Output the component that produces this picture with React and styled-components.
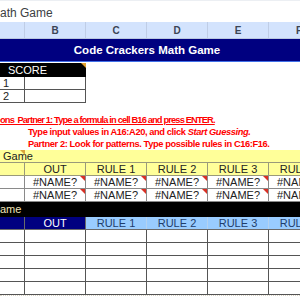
import React from "react";
import styled, { createGlobalStyle } from "styled-components";

const Global = createGlobalStyle`
  html, body { margin: 0; padding: 0; background: #fff; }
  body { width: 300px; height: 300px; overflow: hidden; font-family: "Liberation Sans", Arial, sans-serif; }
`;

const COLS = "25px 61px 61px 61px 61px 61px";

const Page = styled.div`
  width: 330px;
  display: flex;
  flex-direction: column;
`;

const DocTitle = styled.div`
  height: 22px;
  box-sizing: border-box;
  padding-top: 5px;
  font-size: 12px;
  color: #3c4043;
  border-top: 1px solid #eceff3;
`;

const ColHeader = styled.div`
  display: grid;
  grid-template-columns: ${COLS};
  height: 17px;
  background: #d3e3fd;
  border-bottom: 1px solid #b9c7e0;
  box-sizing: border-box;
`;

const ColLetter = styled.div`
  border-right: 1px solid #bfcde6;
  font-size: 10px;
  font-weight: bold;
  color: #3b4454;
  display: flex;
  align-items: center;
  justify-content: center;
`;

const Banner = styled.div`
  height: 23px;
  box-sizing: border-box;
  background: #000080;
  border-bottom: 1px solid #3f6fe8;
  color: #fff;
  font-weight: bold;
  font-size: 11.5px;
  display: flex;
  align-items: center;
  justify-content: center;
  width: 300px;
  padding-right: 6px;
`;

const ScoreTable = styled.div`
  margin-top: 1px;
  display: grid;
  grid-template-columns: 25px 61px;
  width: 86px;
`;

const ScoreHead = styled.div`
  grid-column: 1 / 3;
  height: 14px;
  background: #000;
  color: #fff;
  font-size: 11px;
  padding-left: 8px;
  display: flex;
  align-items: center;
  position: relative;
`;

const Corner = styled.span`
  position: absolute;
  top: 0;
  right: 0;
  width: 0;
  height: 0;
  border-top: 5px solid ${(p) => p.$color};
  border-left: 5px solid transparent;
`;

const ScoreCell = styled.div`
  height: 13px;
  box-sizing: border-box;
  border-bottom: 1px solid #555;
  border-right: 1px solid #555;
  font-size: 11px;
  color: #222;
  padding-left: 3px;
  display: flex;
  align-items: center;
`;

const Instructions = styled.div`
  margin-top: 11px;
  height: 36px;
  display: flex;
  flex-direction: column;
  color: #ff0000;
  font-weight: bold;
  font-size: 9.3px;
  line-height: 12px;
  white-space: nowrap;
`;

const InstrLine = styled.div`
  padding-left: ${(p) => p.$indent}px;
  letter-spacing: ${(p) => (p.$underline ? "-0.85px" : "-0.4px")};
  text-decoration: ${(p) => (p.$underline ? "underline" : "none")};
`;

const Band = styled.div`
  height: ${(p) => p.$h}px;
  box-sizing: border-box;
  background: ${(p) => p.$bg};
  color: ${(p) => p.$fg};
  font-size: 11px;
  padding-left: ${(p) => p.$pad}px;
  display: flex;
  align-items: center;
  position: relative;
  border-bottom: 1px solid ${(p) => p.$line};
`;

const BandCorner = styled.span`
  position: absolute;
  top: 0;
  left: 20px;
  border-top: 5px solid #d9a23a;
  border-left: 5px solid transparent;
`;

const Row = styled.div`
  display: grid;
  grid-template-columns: ${COLS};
  height: 12px;
  background: ${(p) => p.$bg || "transparent"};
  border-bottom: 1px solid ${(p) => p.$line};
`;

const Cell = styled.div`
  position: relative;
  border-right: 1px solid ${(p) => p.$line};
  background: ${(p) => p.$bg || "transparent"};
  color: ${(p) => p.$fg || "#222"};
  font-size: 11px;
  display: flex;
  align-items: center;
  justify-content: center;
  line-height: 12px;
  overflow: hidden;
  white-space: nowrap;
`;

const Footer = styled.div`
  border-top: 1px dotted #d8d2c4;
  height: 20px;
`;

const letters = ["", "B", "C", "D", "E", "F"];
const rules = ["OUT", "RULE 1", "RULE 2", "RULE 3", "RULE 4"];

export default function App() {
  return (
    <Page>
      <Global />
      <DocTitle>ath Game</DocTitle>
      <ColHeader>
        {letters.map((l, i) => (
          <ColLetter key={i}>{l}</ColLetter>
        ))}
      </ColHeader>
      <Banner>Code Crackers Math Game</Banner>
      <ScoreTable>
        <ScoreHead>
          SCORE
          <Corner $color="#e0a030" />
        </ScoreHead>
        <ScoreCell>1</ScoreCell>
        <ScoreCell />
        <ScoreCell>2</ScoreCell>
        <ScoreCell />
      </ScoreTable>
      <Instructions>
        <InstrLine $indent={0} $underline>
          ons&nbsp;&nbsp;Partner 1: Type a formula in cell B16 and press ENTER.
        </InstrLine>
        <InstrLine $indent={28}>
          Type input values in A16:A20, and click <i>Start Guessing.</i>
        </InstrLine>
        <InstrLine $indent={28}>
          Partner 2: Look for patterns. Type possible rules in C16:F16.
        </InstrLine>
      </Instructions>
      <Band $h={13} $bg="#ffff99" $fg="#222" $pad={3} $line="#9a9a7a">
        Game
        <BandCorner />
      </Band>
      <Row $line="#9a9a7a" $bg="#ffff99">
        <Cell $line="#9a9a7a" />
        {rules.map((r) => (
          <Cell key={r} $line="#9a9a7a">{r}</Cell>
        ))}
      </Row>
      {[0, 1].map((k) => (
        <Row key={k} $line="#8a8a8a">
          <Cell $line="#8a8a8a" />
          {rules.map((r) => (
            <Cell key={r} $line="#8a8a8a">
              #NAME?
              <Corner $color="#d93025" />
            </Cell>
          ))}
        </Row>
      ))}
      <Band $h={15} $bg="#000" $fg="#f1e6b8" $pad={0} $line="#000">
        ame
      </Band>
      <Row $line="#6a6a6a">
        <Cell $line="#6a6a6a" $bg="#000080" />
        <Cell $line="#6a6a6a" $bg="#000080" $fg="#fff">OUT</Cell>
        {rules.slice(1).map((r) => (
          <Cell key={r} $line="#b4d2f0" $bg="#99ccff" $fg="#1f3d6b">{r}</Cell>
        ))}
      </Row>
      {[0, 1, 2, 3, 4].map((k) => (
        <Row key={k} $line="#555">
          {letters.map((l, i) => (
            <Cell key={i} $line="#555" />
          ))}
        </Row>
      ))}
      <Footer />
    </Page>
  );
}
